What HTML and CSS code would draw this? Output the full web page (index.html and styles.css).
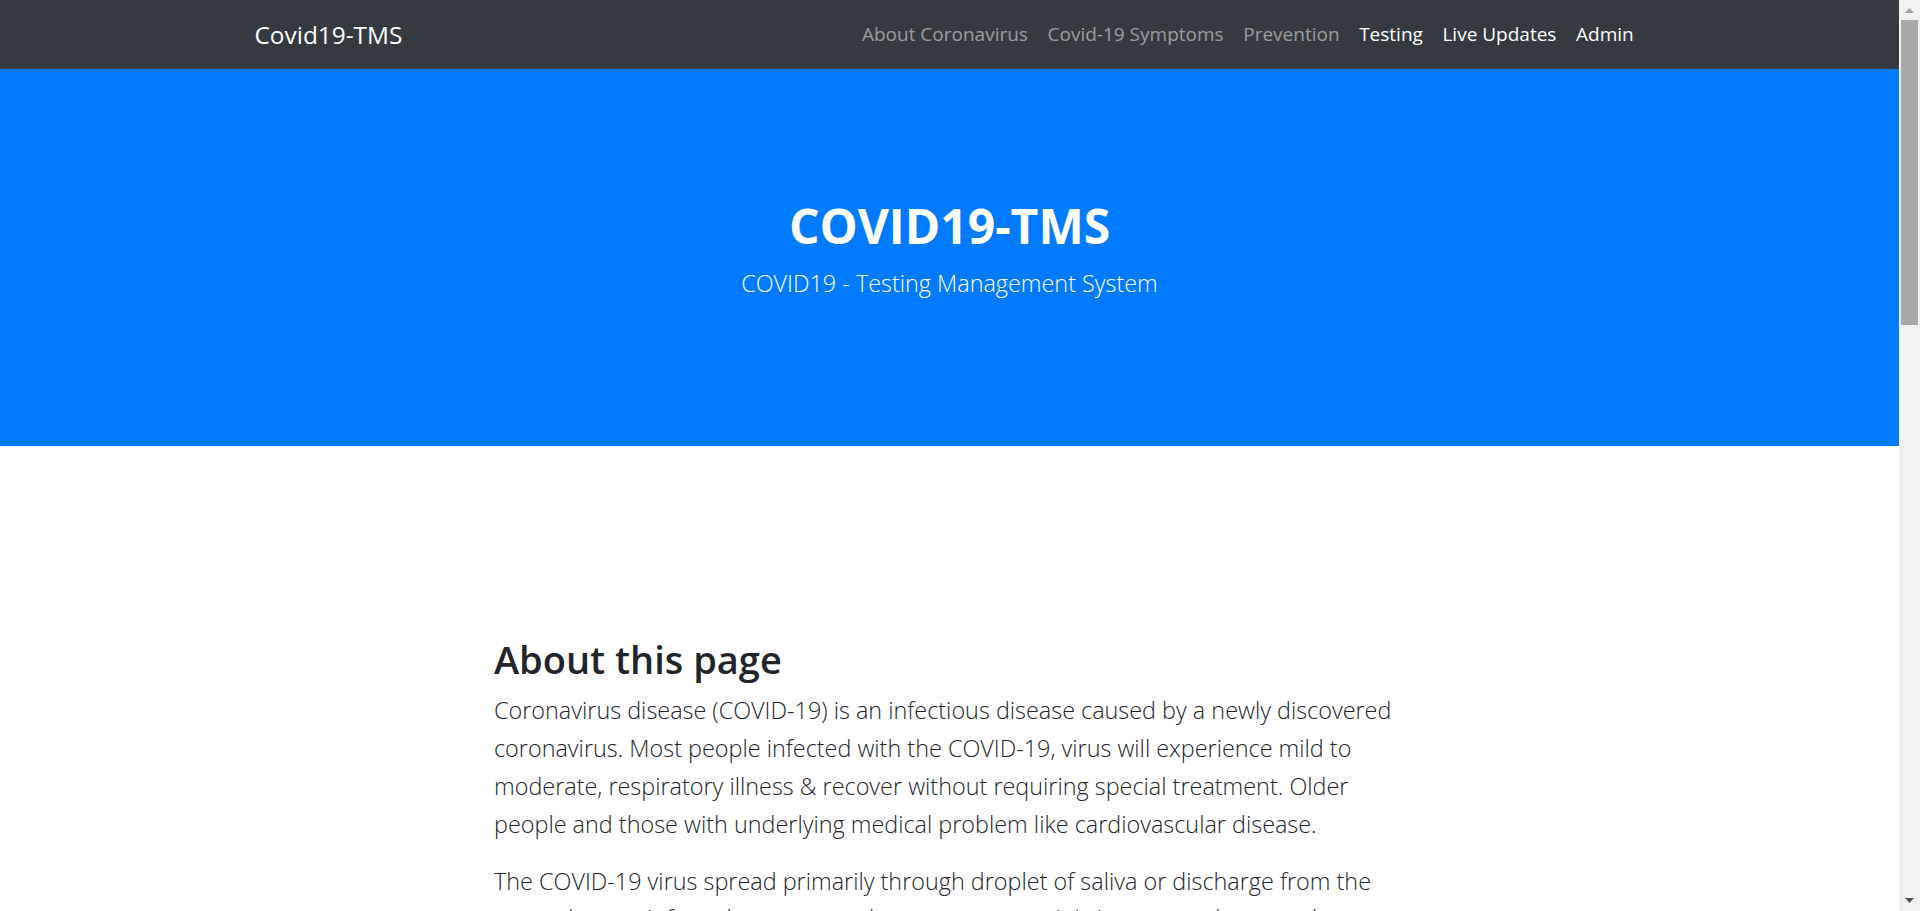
FILE: index.html
```html
<!DOCTYPE html>
<html lang="en">
<head>
<meta charset="utf-8">
<title>Covid19-TMS</title>
<link rel="stylesheet" href="styles.css">
</head>
<body>
<div class="viewport">
  <div class="page">
    <nav class="navbar">
      <div class="navbar-inner">
        <a class="brand" href="#">Covid19-TMS</a>
        <ul class="nav">
          <li><a class="nav-link" href="#">About Coronavirus</a></li>
          <li><a class="nav-link" href="#">Covid-19 Symptoms</a></li>
          <li><a class="nav-link" href="#">Prevention</a></li>
          <li><a class="nav-link active" href="#">Testing</a></li>
          <li><a class="nav-link active" href="#">Live Updates</a></li>
          <li><a class="nav-link active" href="#">Admin</a></li>
        </ul>
      </div>
    </nav>
    <header class="hero">
      <h1 class="hero-title">COVID19-TMS</h1>
      <p class="hero-lead">COVID19 - Testing Management System</p>
    </header>
    <main class="about">
      <div class="about-col">
        <h2 class="about-title">About this page</h2>
        <p class="lead">Coronavirus disease (COVID-19) is an infectious disease caused by a newly discovered coronavirus. Most people infected with the COVID-19, virus will experience mild to moderate, respiratory illness &amp; recover without requiring special treatment. Older people and those with underlying medical problem like cardiovascular disease.</p>
        <p class="lead">The COVID-19 virus spread primarily through droplet of saliva or discharge from the nose when an infected person coughs or sneezes, so it is important that you also practice respiratory etiquette, for example by coughing into a flexed elbow.</p>
        <p class="lead">This system helps hospitals and testing centres register patients, record test samples and publish results, so that positive cases can be isolated and treated as early as possible.</p>
      </div>
    </main>
  </div>
  <aside class="scrollbar" aria-hidden="true">
    <div class="sb-btn">
      <svg width="21" height="20" viewBox="0 0 21 20"><path d="M6 13h9l-4.5-5z" fill="#a3a3a3"/></svg>
    </div>
    <div class="sb-track">
      <div class="sb-thumb"></div>
    </div>
    <div class="sb-btn">
      <svg width="21" height="21" viewBox="0 0 21 21"><path d="M6 8h9l-4.5 5z" fill="#505050"/></svg>
    </div>
  </aside>
</div>
</body>
</html>
```
FILE: styles.css
```css
html,
body {
  margin: 0;
  padding: 0;
  background: #fff;
}

body {
  font-family: "Open Sans", "Noto Sans", "Liberation Sans", sans-serif;
  color: #212529;
}

/* Window frame with the page and its scrollbar */
.viewport {
  display: flex;
  height: 100vh;
  overflow: hidden;
}

.page {
  flex: 1;
  min-width: 0;
  overflow: hidden;
}

.scrollbar {
  flex: none;
  width: 21px;
  background: #f1f1f1;
  display: flex;
  flex-direction: column;
}

.sb-btn {
  flex: none;
  display: flex;
}

.sb-btn svg {
  display: block;
}

.sb-track {
  flex: 1;
  padding: 0 2px;
}

.sb-thumb {
  height: 305px;
  background: #a8a8a8;
}

/* Navbar */
.navbar {
  background: #343a40;
  height: 69px;
}

.navbar-inner {
  width: 1396px;
  height: 100%;
  margin: 0 auto;
  display: flex;
  align-items: center;
  justify-content: space-between;
}

.brand {
  color: #fff;
  text-decoration: none;
  font-size: 24.4px;
  line-height: 36px;
  padding-left: 3px;
}

.nav {
  list-style: none;
  margin: 0;
  padding: 0 4px 0 0;
  display: flex;
}

.nav-link {
  display: block;
  padding: 0 9.8px;
  font-size: 19px;
  line-height: 29px;
  color: rgba(255, 255, 255, 0.5);
  text-decoration: none;
}

.nav-link.active {
  color: #fff;
}

/* Hero */
.hero {
  background: #007bff;
  color: #fff;
  text-align: center;
  height: 377px;
  box-sizing: border-box;
  padding-top: 128px;
}

.hero-title {
  margin: 0 0 11.5px;
  font-size: 48px;
  line-height: 1.2;
  font-weight: 700;
}

.hero-lead {
  margin: 0;
  font-size: 23.4px;
  line-height: 1.5;
  font-weight: 300;
}

/* About */
.about {
  padding-top: 191px;
  padding-bottom: 120px;
}

.about-col {
  width: 911px;
  margin: 0 auto;
}

.about-title {
  margin: 0 0 9.8px;
  font-size: 38px;
  line-height: 1.2;
  font-weight: 600;
  color: #212529;
}

.lead {
  margin: 0 0 19px;
  font-size: 23.4px;
  line-height: 37.8px;
  font-weight: 300;
  color: #212529;
}
```
